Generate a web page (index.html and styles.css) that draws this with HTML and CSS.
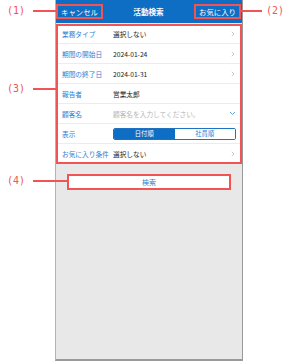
FILE: index.html
```html
<!DOCTYPE html>
<html lang="ja">
<head>
  <meta charset="UTF-8" />
  <title>活動検索</title>
  <link rel="stylesheet" href="styles.css">
</head>
<body>
  <div class="page">
    <div class="phone">
      <div class="header">
        <span class="hbtn mark">キャンセル</span>
        <span class="title">活動検索</span>
        <span class="hbtn mark">お気に入り</span>
      </div>

      <div class="list mark">
        <div class="row">
          <span class="label">業務タイプ</span>
          <span class="value">選択しない</span>
          <svg class="chev" width="4" height="6" viewBox="0 0 4 6"><path d="M0.8 0.8 L3 3 L0.8 5.2" fill="none" stroke="#c2c2c2" stroke-width="0.9"/></svg>
        </div>
        <div class="row">
          <span class="label">期間の開始日</span>
          <span class="value">2024-01-24</span>
          <svg class="chev" width="4" height="6" viewBox="0 0 4 6"><path d="M0.8 0.8 L3 3 L0.8 5.2" fill="none" stroke="#c2c2c2" stroke-width="0.9"/></svg>
        </div>
        <div class="row">
          <span class="label">期間の終了日</span>
          <span class="value">2024-01-31</span>
          <svg class="chev" width="4" height="6" viewBox="0 0 4 6"><path d="M0.8 0.8 L3 3 L0.8 5.2" fill="none" stroke="#c2c2c2" stroke-width="0.9"/></svg>
        </div>
        <div class="row">
          <span class="label">報告者</span>
          <span class="value">営業太郎</span>
        </div>
        <div class="row">
          <span class="label">顧客名</span>
          <span class="value placeholder">顧客名を入力してください。</span>
          <svg class="down" width="7" height="5" viewBox="0 0 7 5"><path d="M1 1 L3.5 3.5 L6 1" fill="none" stroke="#6a9fd4" stroke-width="1"/></svg>
        </div>
        <div class="row">
          <span class="label">表示</span>
          <div class="seg">
            <span class="on">日付順</span>
            <span>社員順</span>
          </div>
        </div>
        <div class="row">
          <span class="label">お気に入り条件</span>
          <span class="value">選択しない</span>
          <svg class="chev" width="4" height="6" viewBox="0 0 4 6"><path d="M0.8 0.8 L3 3 L0.8 5.2" fill="none" stroke="#c2c2c2" stroke-width="0.9"/></svg>
        </div>
      </div>

      <div class="search-wrap">
        <button class="search mark">検索</button>
      </div>
    </div>

    <div class="callout c1"><span>(1)</span><i></i></div>
    <div class="callout c2"><i></i><span>(2)</span></div>
    <div class="callout c3"><span>(3)</span><i></i></div>
    <div class="callout c4"><span>(4)</span><i></i></div>
  </div>
</body>
</html>
```

FILE: styles.css
```css
body {
  margin: 0;
  background: #fff;
  font-family: "Noto Sans CJK JP", "Noto Sans", sans-serif;
}
.page {
  position: relative;
  width: 300px;
  height: 361px;
}
.phone {
  margin-left: 55px;
  width: 188px;
  height: 361px;
  box-sizing: border-box;
  border-left: 1px solid #b4b4b4;
  border-right: 1px solid #999;
  border-bottom: 2px solid #999;
  background: #e8e8e8;
}
.mark {
  outline: 2px solid #f05454;
  outline-offset: -2px;
}
.header {
  height: 23px;
  background: #0e6ec4;
  display: flex;
  align-items: center;
  justify-content: space-between;
  color: #fff;
}
.hbtn {
  font-size: 7.4px;
  height: 15px;
  line-height: 15px;
  padding: 0 5px;
}
.hbtn:last-child {
  margin-right: 1px;
}
.title {
  font-size: 7.6px;
  font-weight: bold;
}
.list {
  background: #fff;
  margin-top: 1px;
  padding: 0 2px;
}
.row {
  height: 20px;
  box-sizing: border-box;
  display: flex;
  align-items: center;
  border-bottom: 1px solid #ececec;
  font-size: 6.7px;
  padding-left: 4px;
  padding-right: 4px;
}
.row:last-child {
  border-bottom: none;
}
.label {
  width: 51px;
  color: #2d80d2;
}
.value {
  flex: 1;
  color: #222;
}
.placeholder {
  color: #b5b5b5;
}
.chev {
  margin-right: 1px;
}
.down {
  margin-right: 0;
}
.seg {
  flex: 1;
  display: flex;
  height: 12px;
  border: 1px solid #1f72c2;
  border-radius: 2px;
  box-sizing: border-box;
  overflow: hidden;
}
.seg span {
  flex: 1;
  text-align: center;
  line-height: 10px;
  font-size: 6.3px;
  color: #2d80d2;
  background: #fff;
}
.seg span.on {
  background: #0e6ec4;
  color: #fff;
}
.search-wrap {
  padding: 10px 11px 0 11px;
}
.search {
  display: block;
  width: 100%;
  height: 16px;
  background: #fff;
  border: none;
  color: #2d80d2;
  font-family: inherit;
  font-size: 7px;
  padding: 0;
}
.callout {
  position: absolute;
  display: flex;
  align-items: center;
  color: #f05454;
  font-size: 10px;
  font-family: "DejaVu Sans Mono", monospace;
}
.callout i {
  display: block;
  height: 2px;
  background: #f05454;
}
.c1 { left: 7px; top: 5px; }
.c1 i { width: 23px; margin-left: 8px; }
.c2 { left: 241px; top: 5px; }
.c2 i { width: 21px; margin-right: 4px; }
.c3 { left: 7px; top: 83px; }
.c3 i { width: 23px; margin-left: 8px; }
.c4 { left: 7px; top: 175px; }
.c4 i { width: 34px; margin-left: 8px; }
```
